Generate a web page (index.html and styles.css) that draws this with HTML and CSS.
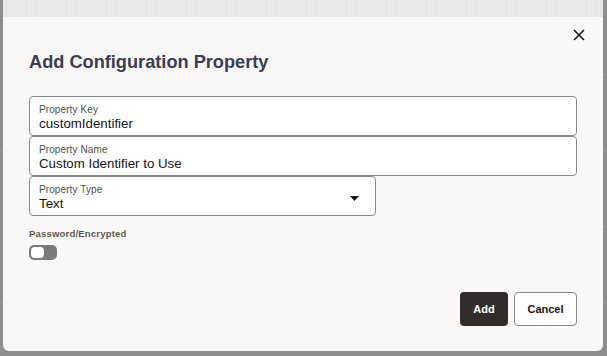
FILE: index.html
```html
<!DOCTYPE html>
<html>
<head>
<meta charset="utf-8">
<link rel="stylesheet" href="styles.css">
</head>
<body>
<div class="backdrop">
  <div class="dialog">
    <div class="band"></div>
    <div class="header">
      <h1 class="title">Add Configuration Property</h1>
      <button class="close" aria-label="Close">
        <svg width="12" height="12" viewBox="0 0 12 12"><path d="M1 1L11 11M11 1L1 11" stroke="#161513" stroke-width="1.6" fill="none"/></svg>
      </button>
    </div>
    <div class="body">
      <div class="field">
        <div class="label">Property Key</div>
        <div class="value">customIdentifier</div>
      </div>
      <div class="field">
        <div class="label">Property Name</div>
        <div class="value">Custom Identifier to Use</div>
      </div>
      <div class="field select">
        <div class="select-text">
          <div class="label">Property Type</div>
          <div class="value">Text</div>
        </div>
        <svg class="caret" width="9" height="5" viewBox="0 0 9 5"><path d="M0 0H9L4.5 5Z" fill="#161513"/></svg>
      </div>
      <div class="switch-group">
        <div class="switch-label">Password/Encrypted</div>
        <div class="switch"><div class="knob"></div></div>
      </div>
    </div>
    <div class="footer">
      <button class="btn primary">Add</button>
      <button class="btn secondary">Cancel</button>
    </div>
  </div>
</div>
</body>
</html>
```
FILE: styles.css
```css
html, body {
  margin: 0;
  padding: 0;
}
body {
  background: #8e8e8e;
  font-family: "Liberation Sans", Arial, sans-serif;
  width: 607px;
  height: 356px;
  overflow: hidden;
}
.backdrop {
  padding: 0 4px 0 3px;
  height: 356px;
  box-sizing: border-box;
  background: repeating-linear-gradient(180deg, #8e8e8e 0, #8e8e8e 74px, #9a9a9a 75px, #8e8e8e 76px);
}
.dialog {
  width: 600px;
  height: 351px;
  background: #f9f8f6;
  border-radius: 0 0 6px 6px;
  display: flex;
  flex-direction: column;
  box-sizing: border-box;
}
.band {
  height: 17px;
  background: repeating-linear-gradient(90deg, #e6e5e3 0, #ecebe9 2px, #e3e2e0 3px, #eeedeb 5px);
}
.header {
  display: flex;
  justify-content: space-between;
  align-items: flex-start;
  padding: 0 14px 0 26px;
}
.title {
  margin: 33px 0 0 0;
  font-size: 18.2px;
  font-weight: bold;
  color: #3a3d55;
  line-height: 24px;
}
.close {
  margin-top: 8px;
  width: 20px;
  height: 20px;
  padding: 0;
  border: none;
  background: none;
  display: flex;
  align-items: center;
  justify-content: center;
}
.body {
  padding: 22px 26px 0 26px;
  display: flex;
  flex-direction: column;
}
.field {
  width: 548px;
  height: 40px;
  box-sizing: border-box;
  border: 1px solid #8b8a88;
  border-radius: 4px;
  background: #ffffff;
  padding: 7px 9px 0 9px;
}
.label {
  font-size: 10px;
  color: #4f4d4b;
  line-height: 12px;
  letter-spacing: 0.1px;
}
.value {
  font-size: 13.3px;
  color: #161513;
  line-height: 15px;
  margin-top: 0;
}
.select {
  width: 347px;
  display: flex;
  justify-content: space-between;
  align-items: flex-start;
}
.caret {
  margin-top: 12px;
  margin-right: 7px;
}
.switch-group {
  margin-top: 12px;
}
.switch-label {
  font-size: 9.5px;
  font-weight: bold;
  color: #5b5957;
  line-height: 12px;
  letter-spacing: 0.2px;
}
.switch {
  margin-top: 5px;
  width: 28px;
  height: 15px;
  border-radius: 5px;
  background: #7c7b79;
  box-sizing: border-box;
  padding: 2px;
}
.knob {
  width: 13px;
  height: 11px;
  border-radius: 4px;
  background: #ffffff;
}
.footer {
  margin-top: auto;
  padding: 0 26px 25px 0;
  display: flex;
  justify-content: flex-end;
  gap: 6px;
}
.btn {
  height: 34px;
  box-sizing: border-box;
  border-radius: 4px;
  font-family: "Liberation Sans", Arial, sans-serif;
  font-size: 11px;
  font-weight: bold;
  padding: 0;
}
.primary {
  width: 48px;
  background: #312d2a;
  color: #ffffff;
  border: none;
}
.secondary {
  width: 63px;
  background: #ffffff;
  color: #161513;
  border: 1px solid #8b8a88;
}
```
